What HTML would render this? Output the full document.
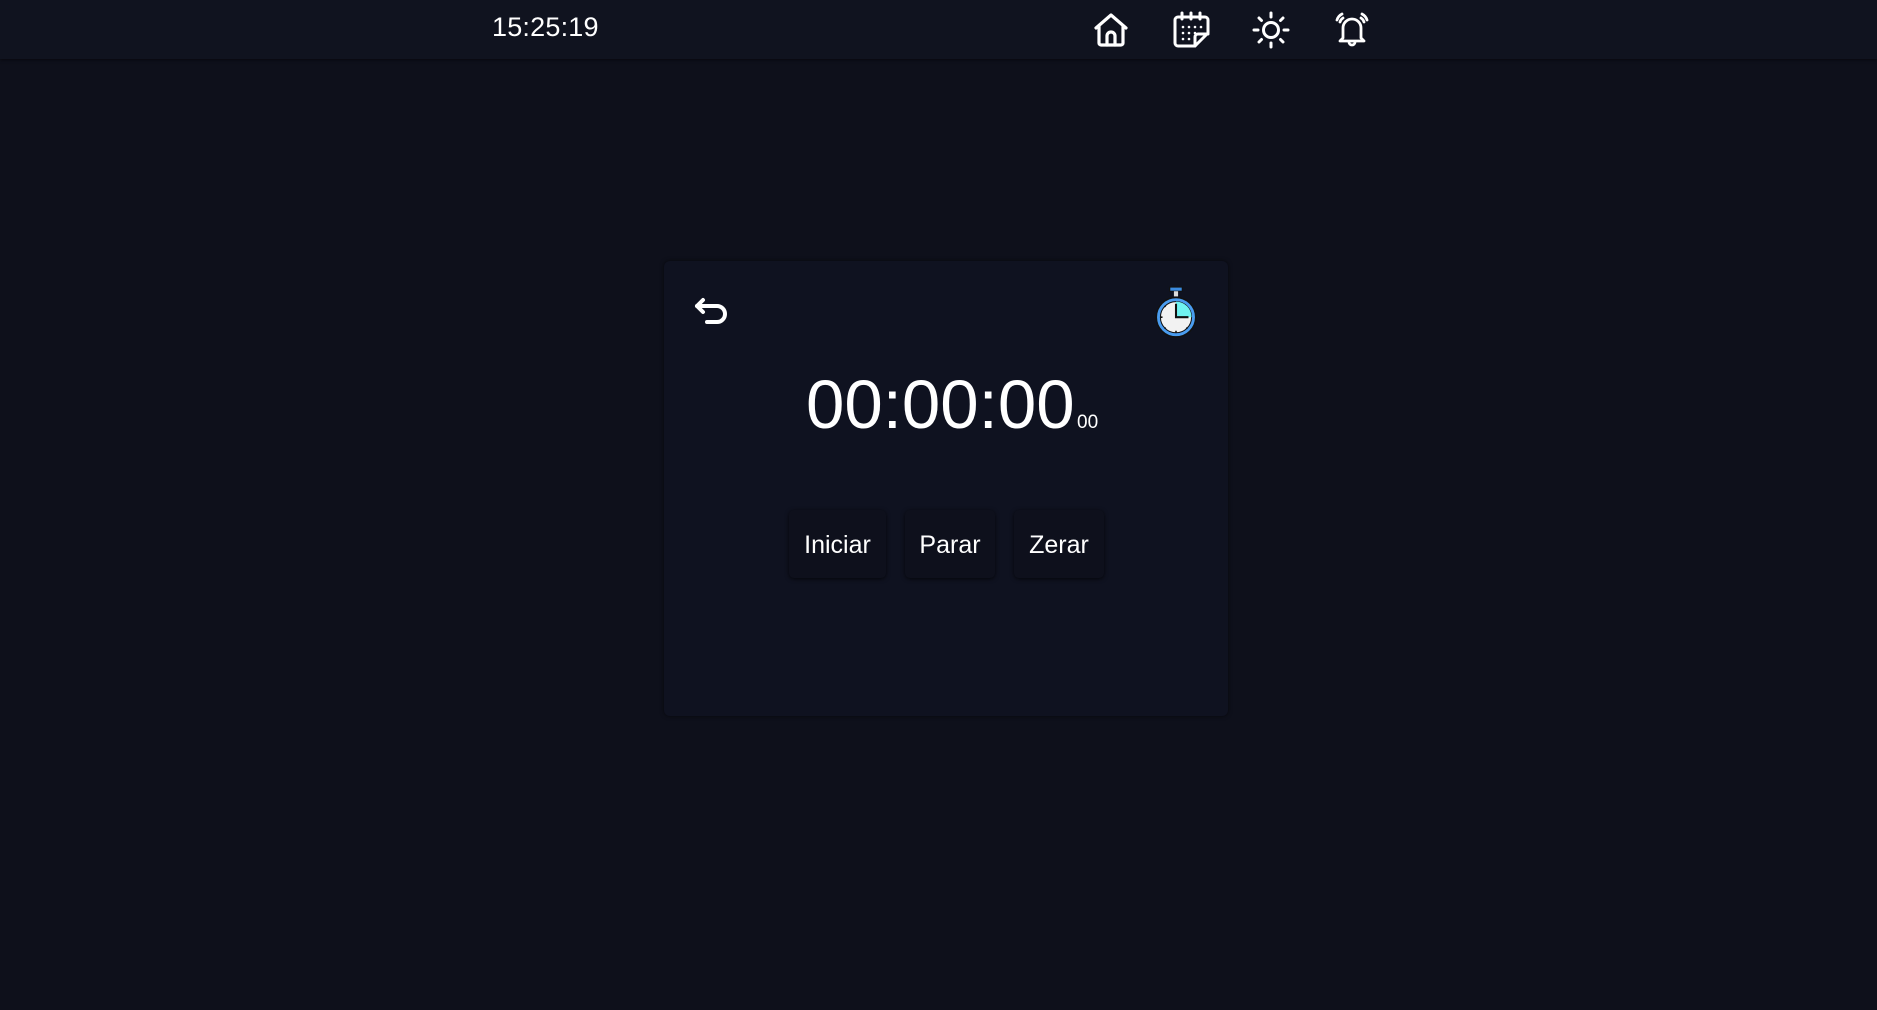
<!DOCTYPE html>
<html><head><meta charset="utf-8"><style>
html,body{margin:0;padding:0;width:1877px;height:1010px;overflow:hidden;background:#0e101b;font-family:"Liberation Sans",sans-serif;color:#fff;}
.top{position:absolute;left:0;top:0;width:1877px;height:59px;background:#10131f;box-shadow:0 1px 3px rgba(0,0,0,.5);}
.clock{position:absolute;left:492px;top:12px;font-size:27px;letter-spacing:0.2px;}
.ic{position:absolute;}
.card{position:absolute;left:664px;top:261px;width:564px;height:455px;background:#0f1220;border-radius:6px;box-shadow:0 0 4px rgba(0,0,0,.6);}
.time{position:absolute;left:806px;top:370px;font-size:69px;line-height:1;}
.ms{position:absolute;left:1077px;top:412px;font-size:19px;}
.btn{position:absolute;top:510px;height:68px;background:#0e101c;border-radius:5px;box-shadow:0 1px 4px rgba(0,0,0,.7);font-size:25px;line-height:70px;text-align:center;}
</style></head><body>
<div class="top">
<div class="clock">15:25:19</div>
<svg class="ic" style="left:1092px;top:11px" width="38" height="38" viewBox="0 0 38 38" fill="none" stroke="#fff" stroke-width="3.2" stroke-linejoin="round" stroke-linecap="round"><path d="M4 17 L19 4 L34 17 M7 15 V32 a2 2 0 0 0 2 2 H29 a2 2 0 0 0 2-2 V15"/><path d="M15 34 V25 a4 4 0 0 1 8 0 V34"/></svg>
<svg class="ic" style="left:1171px;top:11px" width="42" height="38" viewBox="0 0 42 38" fill="none" stroke="#fff" stroke-width="3" stroke-linecap="round" stroke-linejoin="round"><path d="M24 35 H7 a3 3 0 0 1-3-3 V9 a3 3 0 0 1 3-3 H34 a3 3 0 0 1 3 3 V22 Z"/><path d="M24 35 V26 a3 3 0 0 1 3-3 H37"/><path d="M11 2 V8 M20 2 V8 M29 2 V8"/><g fill="#fff" stroke="none"><circle cx="12" cy="16" r="1.3"/><circle cx="18" cy="16" r="1.3"/><circle cx="24" cy="16" r="1.3"/><circle cx="30" cy="16" r="1.3"/><circle cx="12" cy="22" r="1.3"/><circle cx="18" cy="22" r="1.3"/><circle cx="24" cy="22" r="1.3"/><circle cx="12" cy="28" r="1.3"/><circle cx="18" cy="28" r="1.3"/></g></svg>
<svg class="ic" style="left:1252px;top:11px" width="38" height="38" viewBox="0 0 38 38" fill="none" stroke="#fff" stroke-width="3" stroke-linecap="round"><circle cx="19" cy="19" r="7.5"/><path d="M19 2 V6 M19 32 V36 M2 19 H6 M32 19 H36 M7 7 L9.5 9.5 M28.5 28.5 L31 31 M31 7 L28.5 9.5 M9.5 28.5 L7 31"/></svg>
<svg class="ic" style="left:1333px;top:11px" width="38" height="38" viewBox="0 0 38 38" fill="none" stroke="#fff" stroke-width="2.8" stroke-linecap="round" stroke-linejoin="round"><path d="M10 27 V17 a9 9 0 0 1 18 0 V27 L31 30 H7 Z"/><path d="M16 31 a3 3 0 0 0 6 0"/><path d="M4 9 a10 10 0 0 1 5-6 M7 11 a7 7 0 0 1 3-4 M34 9 a10 10 0 0 0-5-6 M31 11 a7 7 0 0 0-3-4"/></svg>
</div>
<div class="card"></div>
<svg class="ic" style="left:693px;top:297px" width="38" height="32" viewBox="0 0 38 32" fill="none" stroke="#fff" stroke-width="4" stroke-linecap="round" stroke-linejoin="round"><path d="M10 3 L4 9 L10 15"/><path d="M4 9 H24 a8 8 0 0 1 0 16 H14"/></svg>
<svg class="ic" style="left:1152px;top:285px" width="48" height="54" viewBox="0 0 44 52"><rect x="16" y="2" width="12" height="4" fill="#3b8be0" stroke="#111" stroke-width="1"/><rect x="20" y="6" width="4" height="5" fill="#ddd"/><circle cx="22" cy="31" r="19" fill="#4a9cf0" stroke="#111" stroke-width="1.5"/><circle cx="22" cy="31" r="15" fill="#f2f2f2" stroke="#111" stroke-width="1"/><path d="M22 31 V16 A15 15 0 0 1 37 31 Z" fill="#6ff2f0"/><path d="M22 18 V31 H34" stroke="#111" stroke-width="2" fill="none"/><g stroke="#111" stroke-width="1.5"><path d="M22 44 V46 M9 31 H7 M12 21 L11 20 M32 41 L33 42 M12 41 L11 42"/></g></svg>
<div class="time">00:00:00</div>
<div class="ms">00</div>
<div class="btn" style="left:789px;width:97px">Iniciar</div>
<div class="btn" style="left:905px;width:90px">Parar</div>
<div class="btn" style="left:1014px;width:90px">Zerar</div>
</body></html>
